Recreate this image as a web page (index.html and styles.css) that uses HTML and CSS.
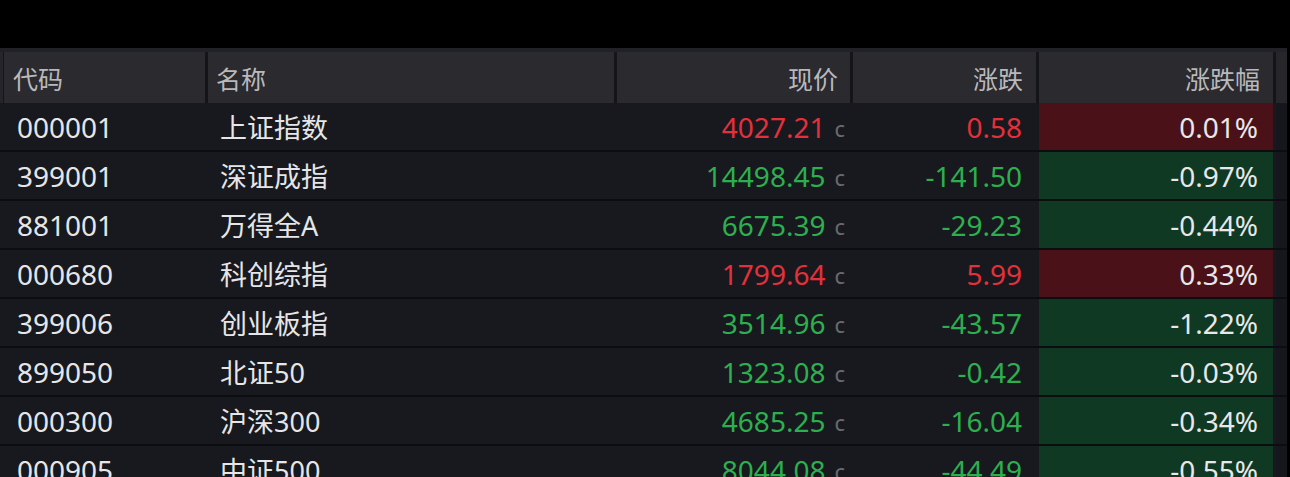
FILE: index.html
```html
<!DOCTYPE html>
<html lang="zh-CN">
<head>
<meta charset="utf-8">
<title>指数行情</title>
<link rel="stylesheet" href="styles.css">
</head>
<body>
<div class="topbar"></div>
<div class="table">
  <div class="row head">
    <div class="cell left">代码</div>
    <div class="cell left name">名称</div>
    <div class="cell right">现价</div>
    <div class="cell right">涨跌</div>
    <div class="cell right">涨跌幅</div>
    <div class="cell scroll"></div>
  </div>
  <div class="row">
    <div class="cell left num">000001</div>
    <div class="cell left name">上证指数</div>
    <div class="cell right price up">4027.21<span class="c">c</span></div>
    <div class="cell right chg up">0.58</div>
    <div class="cell right pct bg-up">0.01%</div>
    <div class="cell scroll"></div>
  </div>
  <div class="row">
    <div class="cell left num">399001</div>
    <div class="cell left name">深证成指</div>
    <div class="cell right price down">14498.45<span class="c">c</span></div>
    <div class="cell right chg down">-141.50</div>
    <div class="cell right pct bg-down">-0.97%</div>
    <div class="cell scroll"></div>
  </div>
  <div class="row">
    <div class="cell left num">881001</div>
    <div class="cell left name">万得全A</div>
    <div class="cell right price down">6675.39<span class="c">c</span></div>
    <div class="cell right chg down">-29.23</div>
    <div class="cell right pct bg-down">-0.44%</div>
    <div class="cell scroll"></div>
  </div>
  <div class="row">
    <div class="cell left num">000680</div>
    <div class="cell left name">科创综指</div>
    <div class="cell right price up">1799.64<span class="c">c</span></div>
    <div class="cell right chg up">5.99</div>
    <div class="cell right pct bg-up">0.33%</div>
    <div class="cell scroll"></div>
  </div>
  <div class="row">
    <div class="cell left num">399006</div>
    <div class="cell left name">创业板指</div>
    <div class="cell right price down">3514.96<span class="c">c</span></div>
    <div class="cell right chg down">-43.57</div>
    <div class="cell right pct bg-down">-1.22%</div>
    <div class="cell scroll"></div>
  </div>
  <div class="row">
    <div class="cell left num">899050</div>
    <div class="cell left name">北证50</div>
    <div class="cell right price down">1323.08<span class="c">c</span></div>
    <div class="cell right chg down">-0.42</div>
    <div class="cell right pct bg-down">-0.03%</div>
    <div class="cell scroll"></div>
  </div>
  <div class="row">
    <div class="cell left num">000300</div>
    <div class="cell left name">沪深300</div>
    <div class="cell right price down">4685.25<span class="c">c</span></div>
    <div class="cell right chg down">-16.04</div>
    <div class="cell right pct bg-down">-0.34%</div>
    <div class="cell scroll"></div>
  </div>
  <div class="row">
    <div class="cell left num">000905</div>
    <div class="cell left name">中证500</div>
    <div class="cell right price down">8044.08<span class="c">c</span></div>
    <div class="cell right chg down">-44.49</div>
    <div class="cell right pct bg-down">-0.55%</div>
    <div class="cell scroll"></div>
  </div>
</div>
</body>
</html>
```

FILE: styles.css
```css
html, body {
  margin: 0;
  padding: 0;
  background: #000;
  height: 477px;
  overflow: hidden;
}
body {
  font-family: "Noto Sans", "Noto Sans CJK SC", sans-serif;
  color: #e6e6e8;
}
.topbar {
  height: 48px;
  background: #000;
}
.table {
  width: 1287px;
  border-top: 4px solid #212227;
}
.row {
  display: grid;
  grid-template-columns: 201px 406px 233px 183px 234px 11px;
  column-gap: 3px;
  padding-left: 4px;
  background: #17191e;
  height: 47px;
  border-bottom: 2px solid #0c0d10;
  font-size: 28px;
}
.row.head {
  height: 51px;
  border-bottom: 0;
  background: #141519;
  padding-left: 1px;
  border-left: 3px solid #25262b;
  font-size: 25px;
  color: #b9b9bd;
}
.cell {
  display: flex;
  align-items: center;
  white-space: nowrap;
}
.head .cell {
  background: #2a2a2f;
}
.cell.left {
  justify-content: flex-start;
  padding-left: 13px;
}
.cell.left.name {
  padding-left: 12px;
  font-size: 27px;
}
.head .cell.left {
  padding-left: 9px;
}
.head .cell.left.name {
  padding-left: 8px;
  font-size: 25px;
}
.cell.right {
  justify-content: flex-end;
  padding-right: 14px;
}
.head .cell.right {
  padding-right: 13px;
}
.cell.price {
  padding-right: 5px;
}
.head .cell:nth-child(3) {
  padding-right: 12px;
}
.cell.pct {
  padding-right: 15px;
  color: #e8e8ea;
}
.c {
  color: #676a70;
  font-size: 22px;
  margin-left: 9px;
  padding-top: 2px;
}
.up {
  color: #e3303b;
}
.down {
  color: #2cb04f;
}
.bg-up {
  background: #4a1218;
}
.bg-down {
  background: #0f3923;
}
.cell.scroll {
  background: #15171c;
}
.head .cell.scroll {
  background: #26262b;
}
```
